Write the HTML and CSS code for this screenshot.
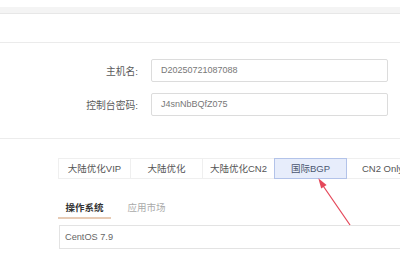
FILE: index.html
```html
<!DOCTYPE html>
<html>
<head>
<meta charset="utf-8">
<link rel="stylesheet" href="styles.css">
</head>
<body>
<div class="page">
  <div class="topband"></div>
  <div class="header"></div>
  <div class="form">
    <div class="row">
      <label class="label">主机名:</label>
      <div class="input">D20250721087088</div>
    </div>
    <div class="row">
      <label class="label">控制台密码:</label>
      <div class="input">J4snNbBQfZ075</div>
    </div>
  </div>
  <div class="lines">
    <div class="tab">大陆优化VIP</div>
    <div class="tab">大陆优化</div>
    <div class="tab">大陆优化CN2</div>
    <div class="tab active">国际BGP</div>
    <div class="tab">CN2 Only</div>
  </div>
  <div class="ostabs">
    <div class="ostab current">操作系统</div>
    <div class="ostab">应用市场</div>
  </div>
  <div class="select">CentOS 7.9</div>
  <svg class="arrow" width="400" height="260" viewBox="0 0 400 260">
    <line x1="322.5" y1="185" x2="350" y2="225" stroke="#e5485a" stroke-width="1.3"/>
    <polygon points="318.3,178.3 321.2,188.6 326.6,184.9" fill="#e5485a"/>
  </svg>
</div>
</body>
</html>
```
FILE: styles.css
```css
html, body {
  margin: 0;
  padding: 0;
  background: #fff;
  overflow: hidden;
}
body {
  width: 400px;
  height: 260px;
  font-family: "Liberation Sans", "Noto Sans CJK SC", sans-serif;
  font-size: 9.5px;
  color: #555;
}
.page {
  position: relative;
  width: 400px;
  height: 260px;
  overflow: hidden;
}
.topband {
  margin-top: 7px;
  height: 6px;
  background: #f4f4f4;
  border-bottom: 1px solid #e7e7e7;
}
.header {
  height: 28px;
  border-bottom: 1px solid #ebebeb;
}
.form {
  display: flex;
  flex-direction: column;
  gap: 11px;
  padding: 16px 0 22px;
  border-bottom: 1px solid #ececec;
}
.row {
  display: flex;
  align-items: center;
  gap: 13px;
}
.label {
  width: 138px;
  text-align: right;
  color: #5a5a5a;
  font-size: 9.8px;
}
.input {
  box-sizing: border-box;
  width: 237px;
  height: 23px;
  border: 1px solid #dcdcdc;
  border-radius: 2px;
  padding: 0 9px;
  line-height: 21px;
  font-size: 9px;
  color: #777;
}
.lines {
  display: flex;
  margin: 19px 0 0 58px;
  width: 420px;
}
.tab {
  flex: 0 0 auto;
  box-sizing: border-box;
  width: 73px;
  height: 21px;
  line-height: 19px;
  text-align: center;
  border: 1px solid #efefef;
  margin-left: -1px;
  color: #555;
  white-space: nowrap;
}
.tab:first-child {
  margin-left: 0;
}
.tab.active {
  background: #e7edfb;
  border-color: #b3c3e9;
  position: relative;
  color: #4a5670;
}
.ostabs {
  display: flex;
  gap: 9px;
  margin: 22px 0 0 58px;
}
.ostab {
  padding: 0 7.5px;
  height: 16px;
  line-height: 14px;
  color: #aaa;
  border-bottom: 2px solid transparent;
}
.ostab.current {
  font-weight: bold;
  color: #333;
  border-bottom-color: #e7cbb5;
}
.select {
  box-sizing: border-box;
  margin: 6px 0 0 59px;
  width: 360px;
  height: 24px;
  border: 1px solid #e3e3e3;
  border-right: none;
  padding-left: 5px;
  line-height: 22px;
  font-size: 9.2px;
  color: #666;
}
.arrow {
  position: absolute;
  left: 0;
  top: 0;
  pointer-events: none;
}
```
